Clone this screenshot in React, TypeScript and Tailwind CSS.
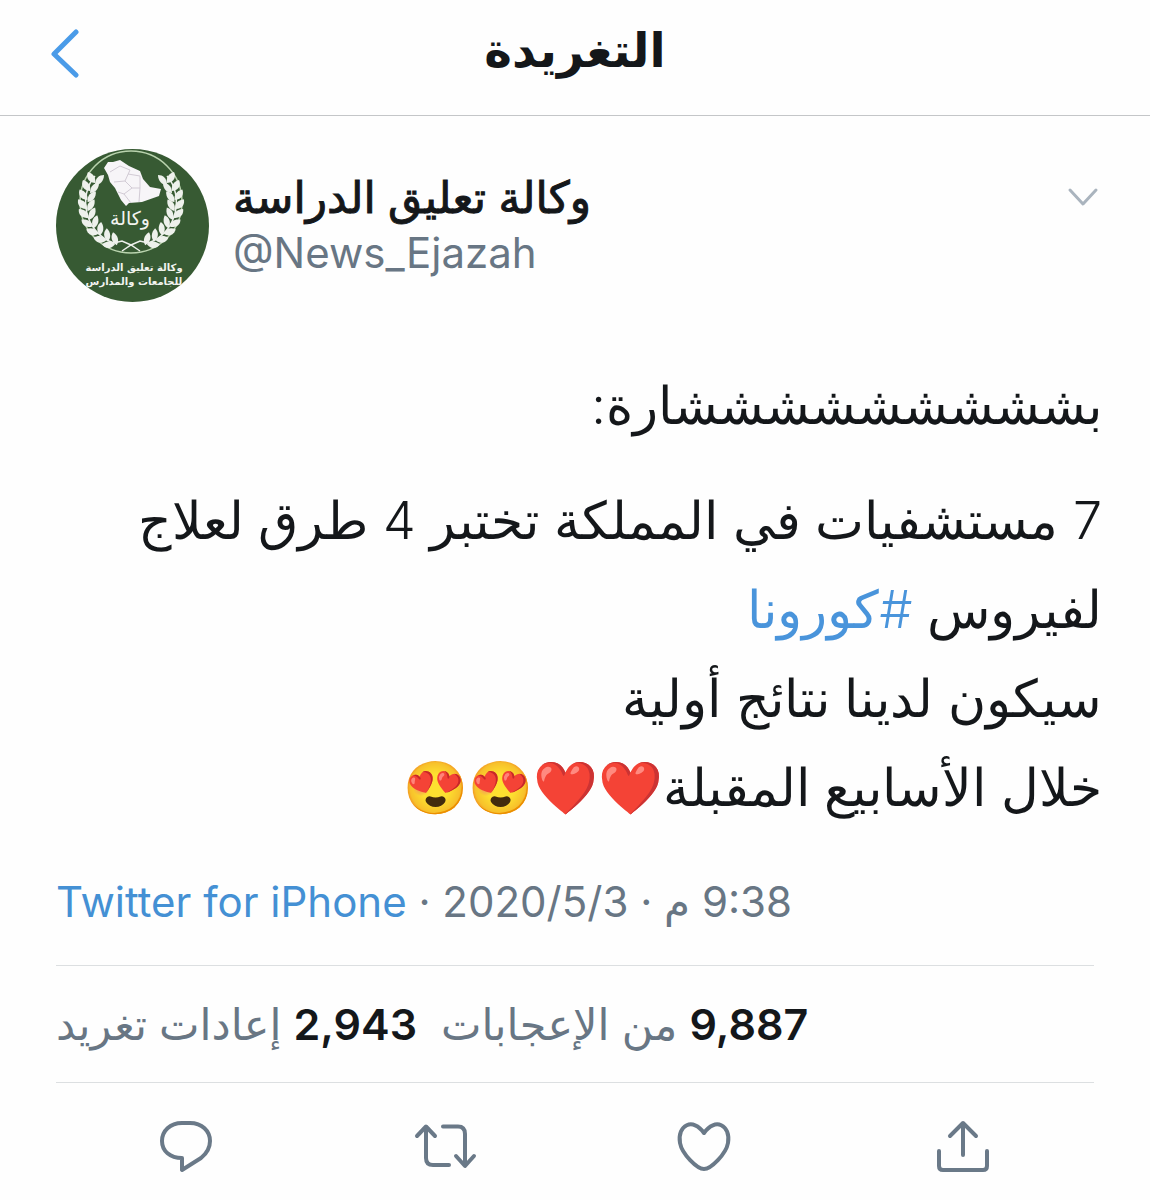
import type { ReactNode } from "react";

const leaves = [
  { x: 6, y: -1, r: 0 }, { x: 1, y: 7, r: 0 }, { x: -2, y: 16, r: -4 }, { x: -3, y: 25, r: -10 },
  { x: -2, y: 34, r: -16 }, { x: 1, y: 43, r: -26 }, { x: 6, y: 51, r: -36 }, { x: 13, y: 58, r: -46 }, { x: 21, y: 63, r: -58 },
];

function Branch() {
  return (
    <g>
      <path d="M39 27C22 46 28 84 58 94L66 92L75 96L84 102" fill="none" stroke="#eef1ec" strokeWidth="1.500" />
      {leaves.map((l) => (
        <g key={l.y} transform={`translate(${l.x + 33} ${l.y + 29}) rotate(${l.r})`} fill="#eef1ec">
          <path d="M0 6C-8 5-9-1-7-5C-1-3 1 1 0 6Z" />
          <path d="M0 8C0 1 4-2 9-2C9 4 5 8 0 8Z" />
        </g>
      ))}
    </g>
  );
}

function Avatar() {
  return (
    <svg viewBox="0 0 153 153" className="size-[153px] shrink-0" role="img" aria-label="وكالة تعليق الدراسة">
      <circle cx="76.500" cy="76.500" r="76.500" fill="#375a33" />
      <circle cx="75" cy="53" r="51" fill="none" stroke="#b9d3ae" strokeWidth="1.500" />
      <Branch />
      <g transform="translate(150 0) scale(-1 1)"><Branch /></g>
      <path d="M48 19L52 13L57 13L64 11L73 17L84 22L87 30L94 38L105 40L103 47L86 53L73 54L70 57L65 51L59 39L54 33L52 26Z" fill="#f7f5f8" />
      <path d="M54 23L64 17L74 21L69 32L58 33M72 25L84 27L84 39L83 53M69 32L76 39L68 45L62 43M68 45L75 54M76 39L84 39" fill="none" stroke="#d2cbd5" strokeWidth="1" />
      <g fill="#f2f4f0" textAnchor="middle" className="font-['DejaVu_Sans',sans-serif]">
        <text x="74" y="76" fontSize="19">وكالة</text>
        <text x="78" y="122" fontSize="10" fontWeight="700">وكالة تعليق الدراسة</text>
        <text x="78" y="136" fontSize="10" fontWeight="700">للجامعات والمدارس</text>
      </g>
    </svg>
  );
}

function Action({ label, children }: { label: string; children: ReactNode }) {
  return (
    <button type="button" aria-label={label} className="flex items-center justify-center">
      <svg viewBox="0 0 64 56" className="h-14 w-16" fill="none" stroke="#6a7988" strokeWidth="4" strokeLinecap="round" strokeLinejoin="round">
        {children}
      </svg>
    </button>
  );
}

export default function App() {
  return (
    <main className="min-h-screen bg-[#fefefe] font-[Inter,'DejaVu_Sans',sans-serif] text-[#14171a]">
      <header className="grid h-[116px] grid-cols-[1fr_auto_1fr] items-center border-b border-[#c4c6c8] px-12 pb-3">
        <button type="button" aria-label="رجوع" className="w-fit">
          <svg viewBox="0 0 34 52" className="h-[52px] w-[34px]" fill="none" stroke="#4a9be8" strokeWidth="5" strokeLinecap="round" strokeLinejoin="round">
            <path d="M28 6L6 28L28 49" />
          </svg>
        </button>
        <h1 dir="rtl" className="pb-1 text-[47px] leading-none font-bold">التغريدة</h1>
      </header>

      <article className="px-14">
        <div className="flex gap-6 pt-[33px]">
          <Avatar />
          <div className="grow pt-5">
            <h2 dir="rtl" className="w-fit text-[44px] leading-[56px] [-webkit-text-stroke:1px]">وكالة تعليق الدراسة</h2>
            <p className="text-[42px] leading-[56px] text-[#687684]">@News_Ejazah</p>
          </div>
          <button type="button" aria-label="المزيد" className="mt-[38px] mr-[-6px] h-fit">
            <svg viewBox="0 0 34 20" className="h-5 w-[34px]" fill="none" stroke="#aab4be" strokeWidth="3" strokeLinecap="round" strokeLinejoin="round">
              <path d="M4 3L17 17L30 3" />
            </svg>
          </button>
        </div>

        <div dir="rtl" className="-mr-2 pt-[59px] text-[52px] leading-[89px] font-light">
          <p className="mb-[26px]">بشششششششششارة:</p>
          <p>
            7 مستشفيات في المملكة تختبر 4 طرق لعلاج<br />
            لفيروس <a href="#corona" className="text-[#4994db]">#كورونا</a><br />
            سيكون لدينا نتائج أولية<br />
            خلال الأسابيع المقبلة❤️❤️😍😍
          </p>
        </div>

        <p dir="rtl" className="border-b border-[#dcdfe1] pt-10 pb-[33px] text-left text-[42px] leading-[60px] text-[#687684]">
          <bdi>9:38</bdi> م · <bdi>2020/5/3</bdi> · <a href="#source" className="text-[#4490d4]">Twitter for iPhone</a>
        </p>

        <p dir="rtl" className="flex justify-end gap-6 border-b border-[#dcdfe1] py-7 text-[43px] leading-[60px] text-[#687684]">
          <span><b className="font-semibold text-[#14171a]">9,887</b> من الإعجابات</span>
          <span><b className="font-semibold text-[#14171a]">2,943</b> إعادات تغريد</span>
        </p>

        <div className="grid grid-cols-4 pt-[35px]">
          <Action label="رد"><path d="M28 5H36C48 5 56 13 56 23C56 31 52 36 47 40L28 52V40C16 40 8 33 8 23C8 13 16 5 28 5Z" /></Action>
          <Action label="إعادة تغريد"><path d="M4 18L13 8.500L22 18M13 9V40Q13 47 20 47H36M30 8.500H45Q52 8.500 52 16V47M43 38L52 48L61 38" /></Action>
          <Action label="إعجاب"><path d="M31 15C20-1 4 7 7 25C9 36 24 51 31 51C38 51 53 36 55 25C58 7 42-1 31 15Z" /></Action>
          <Action label="مشاركة"><path d="M31 37V5M18 18L31 5L44 18M7 33V48Q7 52 11 52H51Q55 52 55 48V33" /></Action>
        </div>
      </article>
    </main>
  );
}
